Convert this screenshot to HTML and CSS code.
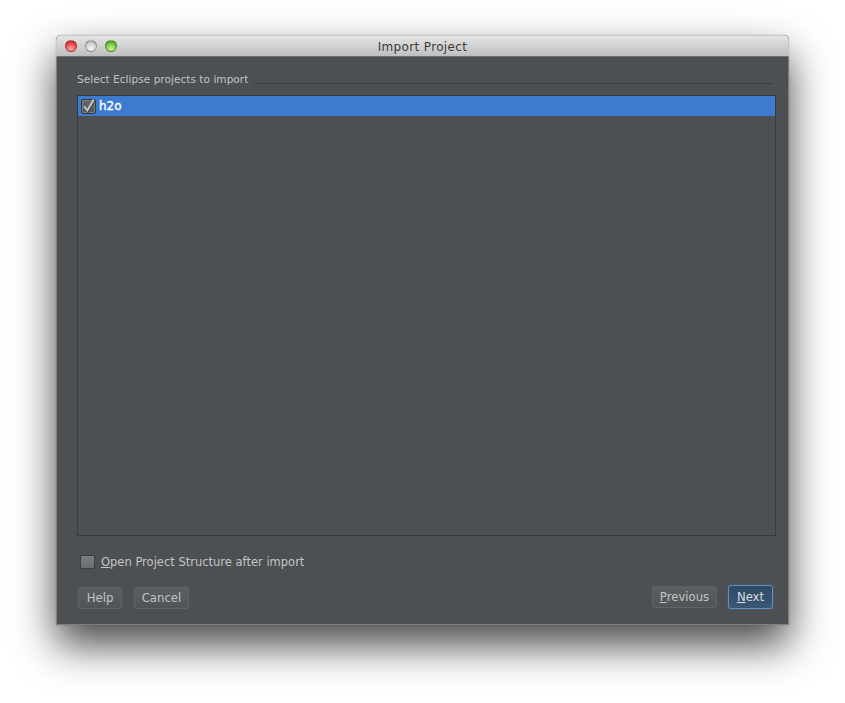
FILE: index.html
```html
<!DOCTYPE html>
<html lang="en">
<head>
<meta charset="utf-8">
<title>Import Project</title>
<link rel="stylesheet" href="styles.css">
</head>
<body>
<div class="window">
  <header class="titlebar">
    <div class="lights">
      <span class="light red"></span>
      <span class="light grey"></span>
      <span class="light green"></span>
    </div>
    <div class="title">Import Project</div>
  </header>
  <main class="content">
    <div class="legend"><span>Select Eclipse projects to import</span><i class="rule"></i></div>
    <div class="list">
      <div class="row">
        <span class="check on">
          <svg width="15" height="15" viewBox="0 0 15 15"><path d="M3.4 8.4 L6.8 12.4 L13 1.6" fill="none" stroke="#2f3133" stroke-width="2.2"/><path d="M3 7.4 L6.4 11.4 L12.8 0.6" fill="none" stroke="#c2c2c2" stroke-width="2.1"/></svg>
        </span>
        <span class="row-text">h2o</span>
      </div>
    </div>
    <label class="option"><span class="check plain"></span><span><u>O</u>pen Project Structure after import</span></label>
    <div class="buttons">
      <div class="group">
        <button class="btn help">Help</button>
        <button class="btn cancel">Cancel</button>
      </div>
      <div class="group right">
        <button class="btn previous"><u>P</u>revious</button>
        <button class="btn next"><u>N</u>ext</button>
      </div>
    </div>
  </main>
</div>
</body>
</html>
```
FILE: styles.css
```css
* { box-sizing: border-box; }
html, body { margin: 0; height: 100%; background: #fff; overflow: hidden; }
body {
  padding: 35px 56px 0;
  font-family: "DejaVu Sans", sans-serif;
}
.window {
  width: 733px;
  height: 590px;
  display: flex;
  flex-direction: column;
  border-radius: 5px 5px 0 0;
  box-shadow: 0 20px 42px rgba(0,0,0,.72), 0 0 1px rgba(0,0,0,.5);
  overflow: hidden;
  background: #4c5052;
}
.titlebar {
  height: 22px;
  flex: none;
  display: flex;
  align-items: center;
  position: relative;
  background: linear-gradient(#e4e4e4, #bfbfbf);
  border: 1px solid #c9c9c9;
  border-bottom: 1px solid #6e6e6e;
}
.lights { display: flex; gap: 8px; padding-left: 8px; }
.light {
  width: 12px;
  height: 12px;
  border-radius: 50%;
  border: 1px solid rgba(0,0,0,.28);
}
.red { background: radial-gradient(circle at 50% 80%, #ffb0a8, #f04a4c 55%, #b81e22); }
.grey { background: radial-gradient(circle at 50% 80%, #f6f6f6, #d2d2d2 55%, #a0a0a0); }
.green { background: radial-gradient(circle at 50% 80%, #cdf59a, #78c843 55%, #3f8a1a); }
.title {
  position: absolute;
  left: 0;
  right: 0;
  top: 2px;
  text-align: center;
  font-size: 12px;
  line-height: 18px;
  letter-spacing: .35px;
  color: #403a3a;
}
.content {
  flex: 1;
  display: flex;
  flex-direction: column;
  padding: 15px 11px 12px 20px;
  background: #4c5052;
  border: 1px solid #7d8082;
  border-top: 0;
}
.legend {
  display: flex;
  align-items: center;
  gap: 7px;
  font-size: 10.5px;
  line-height: 14px;
  letter-spacing: .05px;
  color: #c2c2c2;
  padding-right: 4px;
}
.rule { flex: 1; height: 1px; margin-top: 8px; background: #3c3f41; }
.list {
  width: 699px;
  height: 441px;
  margin-top: 9px;
  border: 1px solid #383b3d;
}
.row {
  height: 20px;
  display: flex;
  align-items: center;
  gap: 3px;
  padding-left: 3px;
  background: #3d7bd0;
}
.check {
  width: 15px;
  height: 15px;
  flex: none;
  display: block;
  border: 1px solid #3a3c3e;
  border-radius: 2px;
  background: linear-gradient(#75787a, #5f6365);
}
.on {
  border-color: #34383b;
  background: linear-gradient(#63676a, #55595b);
  box-shadow: inset 0 0 0 1px #7b7f82;
}
.check svg { display: block; margin: -1px; }
.row-text {
  font-size: 12px;
  color: #fff;
  -webkit-text-stroke: .35px #fff;
}
.option {
  display: flex;
  align-items: center;
  gap: 6px;
  height: 16px;
  margin-top: 18px;
  padding-left: 3px;
  font-size: 11.5px;
  color: #c4c4c4;
}
.plain { height: 14px; background: linear-gradient(#7b7e80, #6a6d6f); }
.buttons {
  display: flex;
  justify-content: space-between;
  align-items: center;
  margin-top: 17px;
  padding: 0 4px 0 1px;
}
.group { display: flex; gap: 12px; align-items: center; }
.right { gap: 11px; margin-top: -2px; }
.btn {
  height: 22px;
  padding: 0;
  font: 11.7px "DejaVu Sans", sans-serif;
  color: #c4c4c4;
  border: 1px solid #5f6466;
  border-radius: 3px;
  background: linear-gradient(#5a5f61, #505456);
}
.help { width: 44px; }
.cancel { width: 55px; }
.previous { width: 65px; }
.next {
  width: 45px;
  height: 24px;
  color: #dcdcdc;
  border: 1px solid #5e90c0;
  box-shadow: 0 0 1px #5e90c0;
  background: linear-gradient(#2f4a68, #3a5776);
}
```
